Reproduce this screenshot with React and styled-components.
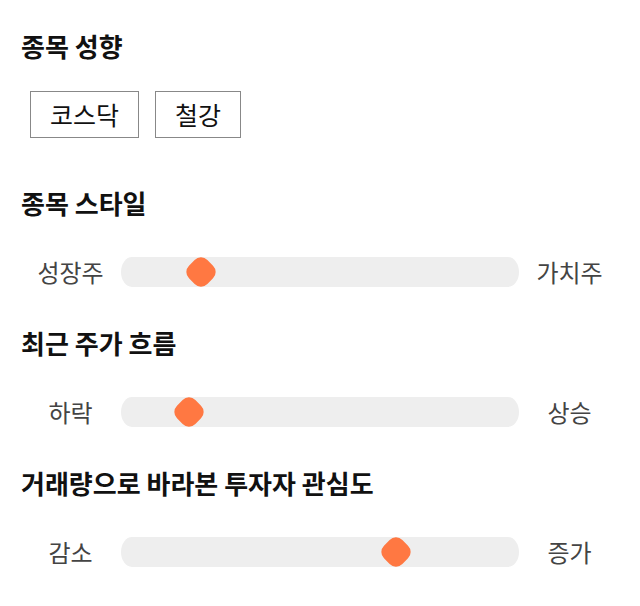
import React from "react";
import styled, { createGlobalStyle } from "styled-components";

const Global = createGlobalStyle`
  html, body { margin: 0; padding: 0; background: #fff; }
  body { font-family: "Noto Sans CJK KR", "Noto Sans", sans-serif; color: #111; }
`;

const Page = styled.div`
  padding: 31px 20px 0 20px;
  width: 600px;
`;

const Section = styled.section`
  display: flex;
  flex-direction: column;
  gap: ${(p) => p.$gap}px;
  margin-bottom: ${(p) => p.$after}px;
`;

const Heading = styled.h2`
  margin: 0;
  padding-left: 1px;
  font-size: 26px;
  line-height: 30px;
  font-weight: 700;
  color: #111;
`;

const ChipRow = styled.div`
  display: flex;
  gap: 16px;
  padding-left: 10px;
`;

const Chip = styled.button`
  height: 47px;
  padding: 0 19px;
  border: 1px solid #888;
  background: #fff;
  font-family: inherit;
  font-size: 25px;
  color: #111;
  line-height: 1;
  cursor: pointer;
`;

const SliderRow = styled.div`
  display: grid;
  grid-template-columns: 101px 398px 101px;
  align-items: center;
  height: 30px;
`;

const EndLabel = styled.span`
  text-align: center;
  font-size: 24px;
  color: #444;
  line-height: 30px;
`;

const Track = styled.div`
  position: relative;
  height: 30px;
  background: #eeeeee;
  border-radius: 11px / 15px;
`;

const Thumb = styled.div`
  position: absolute;
  top: 0;
  width: 30px;
  height: 30px;
  margin-left: -15px;
  display: flex;
  align-items: center;
  justify-content: center;
  &::before {
    content: "";
    flex: none;
    width: 26px;
    height: 26px;
    background: #ff7842;
    border-radius: 9px;
    transform: rotate(45deg);
  }
`;

const sliders = [
  { title: "종목 스타일", left: "성장주", right: "가치주", pos: 80 },
  { title: "최근 주가 흐름", left: "하락", right: "상승", pos: 68 },
  { title: "거래량으로 바라본 투자자 관심도", left: "감소", right: "증가", pos: 275 },
];

export default function App() {
  return (
    <Page>
      <Global />
      <Section $gap={30} $after={50}>
        <Heading>종목 성향</Heading>
        <ChipRow>
          <Chip>코스닥</Chip>
          <Chip>철강</Chip>
        </ChipRow>
      </Section>
      {sliders.map((s) => (
        <Section key={s.title} $gap={39} $after={41}>
          <Heading>{s.title}</Heading>
          <SliderRow>
            <EndLabel>{s.left}</EndLabel>
            <Track>
              <Thumb style={{ left: s.pos }} />
            </Track>
            <EndLabel>{s.right}</EndLabel>
          </SliderRow>
        </Section>
      ))}
    </Page>
  );
}
